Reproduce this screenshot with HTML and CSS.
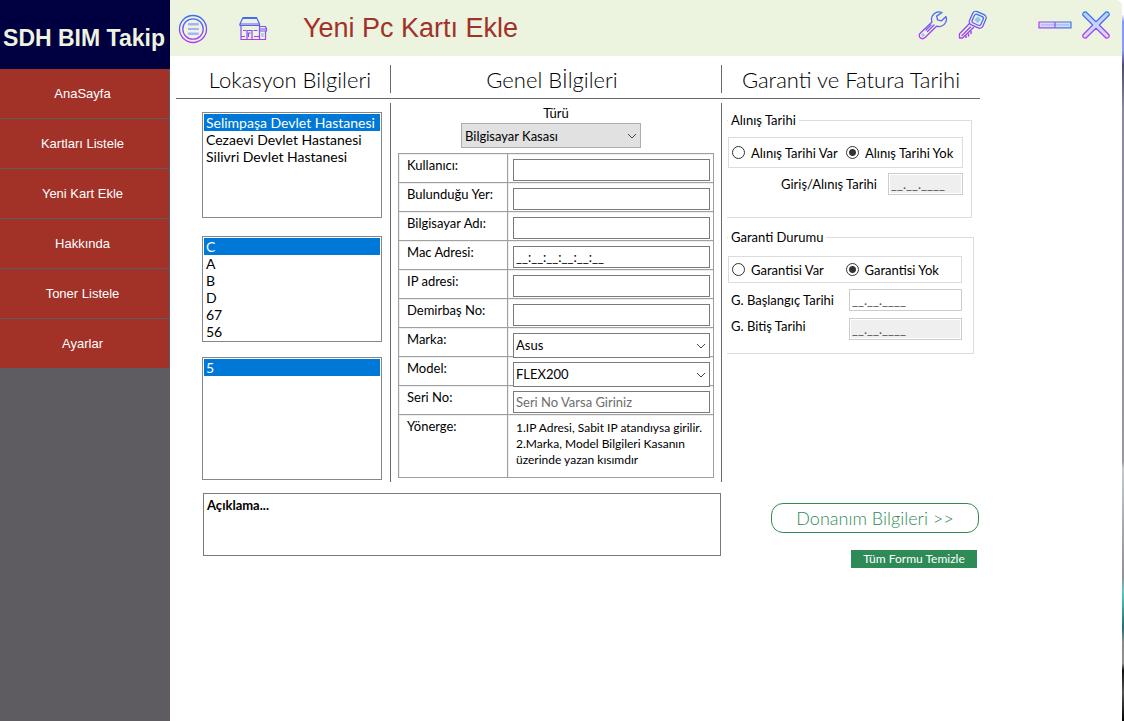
FILE: index.html
```html
<!DOCTYPE html>
<html lang="tr">
<head>
<meta charset="utf-8">
<title>SDH BIM Takip</title>
<link rel="stylesheet" href="styles.css">
</head>
<body>
<div class="app">
  <aside class="sidebar">
    <div class="brand">SDH BIM Takip</div>
    <nav class="menu">
      <button type="button">AnaSayfa</button>
      <button type="button">Kartları Listele</button>
      <button type="button">Yeni Kart Ekle</button>
      <button type="button">Hakkında</button>
      <button type="button">Toner Listele</button>
      <button type="button">Ayarlar</button>
    </nav>
  </aside>

  <div class="window">
    <header class="topbar">
      <svg width="0" height="0" class="defs" aria-hidden="true">
        <defs>
          <linearGradient id="g" gradientUnits="userSpaceOnUse" x1="0" y1="0" x2="0" y2="30">
            <stop offset="0" stop-color="#2f74f5"/><stop offset="1" stop-color="#bf35f5"/>
          </linearGradient>
          <linearGradient id="gh" gradientUnits="userSpaceOnUse" x1="0" y1="0" x2="34" y2="0">
            <stop offset="0" stop-color="#b43cf0"/><stop offset="1" stop-color="#3c7cf0"/>
          </linearGradient>
          <linearGradient id="f" gradientUnits="userSpaceOnUse" x1="0" y1="0" x2="0" y2="30">
            <stop offset="0" stop-color="#a4dcfb"/><stop offset="1" stop-color="#e6d4f8"/>
          </linearGradient>
        </defs>
      </svg>
      <button type="button" class="icon" aria-label="Menü">
        <svg width="30" height="30" viewBox="0 0 30 30" fill="none" stroke="url(#g)">
          <circle cx="15" cy="15" r="13.5" stroke-width="1.3"/>
          <circle cx="15" cy="15" r="10.2" stroke-width="1.3"/>
          <path d="M10 10.2h10.500M10 15h10.500M10 19.800h10.500" stroke="#a4b0fc" stroke-width="2"/>
          <path d="M10 10.200h10.500M10 15h10.500M10 19.800h10.500" stroke="#a4b0fc" stroke-width="2"/>
        </svg>
      </button>
      <button type="button" class="icon icon-store" aria-label="Kurum">
        <svg width="30" height="30" viewBox="0 0 30 30" fill="none" stroke="url(#g)" stroke-width="1.2">
          <path d="M4.500 4.500h14.500l2.500 5.500h-19.500zM5 4.500v-1h13.500v1M2 10v1.500h19.500v-1.500M3 11.500v14h18.500v-14"/>
          <path d="M21.500 12.500h6l1 2.500h-7M21.500 17h7v-2M27.500 17v8.500h-6M9 25.500v-9h5v9M10.500 23v-4h2.200M5 16.500h3M15.500 16.500h4M3 22.500h4M16 22.500h5"/>
          <path d="M24.500 19v4" stroke="#9fd0fb" stroke-width="2.500"/>
        </svg>
      </button>
      <h1>Yeni Pc Kartı Ekle</h1>
      <div class="tools">
        <button type="button" class="icon" aria-label="Araçlar">
          <svg width="30" height="30" viewBox="0 0 30 30" fill="none" stroke="url(#g)" stroke-width="1.300" stroke-linejoin="round" stroke-linecap="round">
            <path d="M24 2.500a7.500 7.500 0 0 0-10 9.500L2.200 23.200a3.200 3.200 0 0 0 4.600 4.600L18.500 16.200a7.500 7.500 0 0 0 9.500-9.600l-4.500 4.200-4-1-.8-3.700z"/>
            <path d="M9.500 21.500l6.500-6.500M8 20l5-5"/>
            <circle cx="5" cy="25" r="1" stroke="#8dc8fa"/>
          </svg>
        </button>
        <button type="button" class="icon" aria-label="Anahtar">
          <svg width="30" height="30" viewBox="0 0 30 30" fill="none" stroke="url(#g)" stroke-width="1.300" stroke-linejoin="round" stroke-linecap="round">
            <rect x="12.500" y="2.500" width="14.500" height="14.500" rx="3.500" transform="rotate(24 19.700 9.700)"/>
            <rect x="15" y="5" width="9.500" height="9.500" rx="2" transform="rotate(24 19.700 9.700)"/>
            <path d="M19.700 7.200l2.500 2.500-2.500 2.500-2.500-2.500z" fill="#8cc6fa" stroke="#8cc6fa"/>
            <path d="M11.500 13.500L1.800 23.500q-.8 1-.3 2.500v2h3L15.500 17.500M4 25.500l8.500-8.500"/>
            <path d="M8 27.500v-1.500M10.500 26v-2M13 23.500v-2" stroke-width="1.500"/>
          </svg>
        </button>
        <button type="button" class="icon icon-min" aria-label="Küçült">
          <svg width="34" height="8" viewBox="0 0 34 8" fill="#cfe0f5" stroke="url(#gh)" stroke-width="1.200">
            <path d="M1 1h32v5.800h-32zM17 1v5.800"/>
            <path d="M3 3.900h28" opacity=".35"/>
          </svg>
        </button>
        <button type="button" class="icon icon-close" aria-label="Kapat">
          <svg width="30" height="30" viewBox="0 0 30 30" fill="url(#f)" stroke="url(#g)" stroke-width="1.200" stroke-linejoin="round">
            <path d="M1.800 5q-.3-3.300 3-3.200L15 11.700 25.200 1.800q3.300-.1 3 3.200L18.300 15l9.900 10q.3 3.300-3 3.200L15 18.300 4.800 28.200q-3.300.1-3-3.200L11.700 15z"/>
          </svg>
        </button>
      </div>
    </header>

    <main class="content">
      <div class="cols heads">
        <h2>Lokasyon Bilgileri</h2>
        <h2>Genel Bİlgileri</h2>
        <h2>Garanti ve Fatura Tarihi</h2>
      </div>

      <div class="cols body">
        <section class="location">
          <select size="6" class="list" aria-label="Hastane">
            <option selected>Selimpaşa Devlet Hastanesi</option>
            <option>Cezaevi Devlet Hastanesi</option>
            <option>Silivri Devlet Hastanesi</option>
          </select>
          <select size="6" class="list" aria-label="Blok">
            <option selected>C</option>
            <option>A</option>
            <option>B</option>
            <option>D</option>
            <option>67</option>
            <option>56</option>
          </select>
          <select size="7" class="list list-tall" aria-label="Kat">
            <option selected>5</option>
          </select>
        </section>

        <section class="general">
          <label for="type">Türü</label>
          <div class="combo combo-type"><select id="type"><option>Bilgisayar Kasası</option></select><svg width="10" height="6" viewBox="0 0 10 6"><path d="M1 1l4 4 4-4"/></svg></div>
          <table class="form">
            <tr><th><label for="user">Kullanıcı:</label></th><td><input id="user" type="text"></td></tr>
            <tr><th><label for="place">Bulunduğu Yer:</label></th><td><input id="place" type="text"></td></tr>
            <tr><th><label for="pc">Bilgisayar Adı:</label></th><td><input id="pc" type="text"></td></tr>
            <tr><th><label for="mac">Mac Adresi:</label></th><td><input id="mac" class="mask" type="text" value="__:__:__:__:__:__"></td></tr>
            <tr><th><label for="ip">IP adresi:</label></th><td><input id="ip" type="text"></td></tr>
            <tr><th><label for="asset">Demirbaş No:</label></th><td><input id="asset" type="text"></td></tr>
            <tr><th><label for="brand">Marka:</label></th><td><div class="combo"><select id="brand"><option>Asus</option></select><svg width="10" height="6" viewBox="0 0 10 6"><path d="M1 1l4 4 4-4"/></svg></div></td></tr>
            <tr><th><label for="model">Model:</label></th><td><div class="combo"><select id="model"><option>FLEX200</option></select><svg width="10" height="6" viewBox="0 0 10 6"><path d="M1 1l4 4 4-4"/></svg></div></td></tr>
            <tr><th><label for="serial">Seri No:</label></th><td><input id="serial" type="text" placeholder="Seri No Varsa Giriniz"></td></tr>
            <tr class="help"><th>Yönerge:</th><td>1.IP Adresi, Sabit IP atandıysa girilir.<br>2.Marka, Model Bilgileri Kasanın<br>üzerinde yazan kısımdır</td></tr>
          </table>
        </section>

        <section class="warranty">
          <fieldset class="purchase">
            <legend>Alınış Tarihi</legend>
            <div class="choices">
              <label><input type="radio" name="purchase">Alınış Tarihi Var</label>
              <label><input type="radio" name="purchase" checked>Alınış Tarihi Yok</label>
            </div>
            <div class="date date-short">
              <label for="bought">Giriş/Alınış Tarihi</label>
              <input id="bought" class="mask" type="text" value="__.__.____" disabled>
            </div>
          </fieldset>
          <fieldset class="guarantee">
            <legend>Garanti Durumu</legend>
            <div class="choices">
              <label><input type="radio" name="guarantee">Garantisi Var</label>
              <label><input type="radio" name="guarantee" checked>Garantisi Yok</label>
            </div>
            <div class="date">
              <label for="start">G. Başlangıç Tarihi</label>
              <input id="start" class="mask" type="text" value="__.__.____">
            </div>
            <div class="date date-end">
              <label for="end">G. Bitiş Tarihi</label>
              <input id="end" class="mask" type="text" value="__.__.____" disabled>
            </div>
          </fieldset>
        </section>
      </div>

      <div class="cols foot">
        <textarea aria-label="Açıklama">Açıklama...</textarea>
        <div class="actions">
          <button type="button" class="next">Donanım Bilgileri &gt;&gt;</button>
          <button type="button" class="clear">Tüm Formu Temizle</button>
        </div>
      </div>
    </main>
  </div>
  <div class="backdrop"></div>
</div>
</body>
</html>
```

FILE: styles.css
```css
* { box-sizing: border-box; }

body {
  margin: 0;
  font: 13px/16px Lato, "Open Sans", sans-serif;
  color: #000;
  background: #fff;
}

button, input, select, textarea { font: inherit; color: inherit; }
button { cursor: pointer; }

.app {
  display: grid;
  grid-template-columns: 170px 1fr 2px;
  min-height: 100vh;
}

.sidebar { background: #5e5c61; }

.brand {
  display: flex;
  align-items: center;
  justify-content: center;
  height: 69px;
  padding: 6px 2px 0 0;
  background: #000040;
  color: #edf3df;
  font: bold 23px/26px "Liberation Sans", sans-serif;
  white-space: nowrap;
}

.menu {
  display: flex;
  flex-direction: column;
  gap: 1px;
  padding-right: 1px;
}

.menu button {
  height: 49px;
  padding: 0 4px 0 0;
  border: 0;
  background: #a23128;
  color: #fff;
  font: 13px/16px "Liberation Sans", sans-serif;
}

.topbar {
  display: flex;
  align-items: center;
  height: 56px;
  padding: 0 11px 0 8px;
  background: #ecf3df;
  border-top-right-radius: 6px;
}

.defs { position: absolute; }

.icon {
  display: flex;
  padding: 1px 0 0;
  border: 0;
  background: none;
}

.icon-store { margin-left: 30px; }

.topbar h1 {
  margin: 0 0 0 35px;
  color: #a23128;
  font: 27px/32px "Liberation Sans", sans-serif;
}

.tools {
  display: flex;
  align-items: center;
  gap: 10px;
  margin-left: auto;
  padding-bottom: 7px;
}

.icon-min { margin-left: 40px; }
.icon-close { margin-left: -1px; }

.content {
  max-width: 810px;
  padding-left: 6px;
}

.cols {
  display: grid;
  grid-template-columns: 214fr 331fr 259fr;
}

.heads {
  padding: 9px 0 5px;
  border-bottom: 1px solid #69696b;
}

.heads h2 {
  margin: 0;
  padding-top: 1px;
  font-size: 22px;
  line-height: 27px;
  font-weight: 300;
  text-align: center;
}

.heads h2:first-child { padding-left: 14px; }
.heads h2:nth-child(2) { padding-right: 8px; }
.heads h2 + h2, .body section + section { border-left: 1px solid #69696b; }

.body { padding-top: 4px; }

.location {
  display: flex;
  flex-direction: column;
  gap: 18px;
  padding: 9px 8px 2px 26px;
}

.list {
  width: 100%;
  height: 106px;
  padding: 1px;
  border: 1px solid #828790;
  border-radius: 0;
  background: #fff;
  font-size: 14px;
  overflow: hidden;
  outline: 0;
}

.list-tall { height: 123px; margin-top: -3px; }

.list option {
  height: 17px;
  min-height: 17px;
  padding: 0 2px;
  font-size: 14px;
  line-height: 17px;
  color: #000;
}

.list option:checked {
  background: #0078d7 linear-gradient(#0078d7, #0078d7);
  color: #fff;
  -webkit-text-fill-color: #fff;
}

.general {
  display: flex;
  flex-direction: column;
  align-items: center;
  padding: 2px 7px 4px;
}

.combo {
  display: grid;
  align-items: center;
}

.combo select, .combo svg { grid-area: 1 / 1; }

.combo select {
  appearance: none;
  width: 100%;
  height: 25px;
  padding: 0 2px 1px;
  border: 1px solid #7a7a7a;
  border-radius: 0;
  background: #fff;
}

.combo svg {
  justify-self: end;
  margin-right: 4px;
  fill: none;
  stroke: #444;
  pointer-events: none;
}

.combo-type { width: 180px; margin: 2px 10px 5px 0; }
.combo-type select { background: #e1e1e1; border-color: #adadad; padding: 0 3px; }

.form {
  width: 100%;
  border-collapse: collapse;
  border: 1px solid #a0a0a0;
}

.form th, .form td {
  height: 29px;
  border: 1px solid #a0a0a0;
  vertical-align: top;
  text-align: left;
  font-weight: 400;
  box-shadow: inset 1px 1px #eee;
}

.form th { width: 109px; padding: 3px 8px; }
.form td { padding: 5px 3px 1px 5px; }
.form .combo { margin-bottom: -3px; }

.form input {
  display: block;
  width: 100%;
  height: 22px;
  padding: 0 2px;
  border: 1px solid #7a7a7a;
}

.form input::placeholder { color: #6d6d6d; }

.form .help th, .form .help td { height: 63px; }
.form .help td { padding: 5px 0 0 8px; font-size: 12px; white-space: nowrap; }

.warranty {
  display: flex;
  flex-direction: column;
  gap: 11px;
  padding: 9px 6px 0 5px;
}

fieldset {
  min-width: 0;
  margin: 0;
  padding: 0 11px 0 1px;
  border: 1px solid #dcdcdc;
  border-left: 0;
}

legend { padding: 0 3px; }
.purchase { padding-bottom: 22px; margin-right: 2px; }
.guarantee { padding-bottom: 13px; }

.choices {
  display: grid;
  grid-template-columns: 115fr 116fr;
  align-items: center;
  height: 31px;
  margin-top: 9px;
  padding: 0 1px 0 3px;
  border: 1px solid #dcdcdc;
}

.purchase .choices { margin-right: -3px; }
.guarantee .choices { height: 27px; margin-top: 11px; }

.choices label {
  display: flex;
  align-items: center;
  gap: 6px;
  white-space: nowrap;
}

.choices input {
  appearance: none;
  flex: none;
  width: 13px;
  height: 13px;
  margin: 0;
  border: 1px solid #333;
  border-radius: 50%;
}

.choices input:checked { background: radial-gradient(#333 0 3px, #fff 4px); }

.date {
  display: grid;
  grid-template-columns: 118fr 113fr;
  align-items: center;
  margin-top: 6px;
  padding-left: 3px;
}

.date-short {
  grid-template-columns: 1fr 75px;
  gap: 11px;
  margin: 5px -3px 0 0;
  text-align: right;
}

.date-end { align-items: start; margin-top: 7px; }

.date input {
  width: 100%;
  height: 22px;
  padding: 0 2px;
  border: 1px solid #ccc;
  background: #fff;
  color: #555;
}

.date input:disabled { background: #efefef; box-shadow: inset 0 0 0 1px #fff; }

.foot { padding-top: 11px; }

.foot textarea {
  display: block;
  grid-column: span 2;
  height: 63px;
  margin-left: 27px;
  padding: 3px;
  border: 1px solid #7a7a7a;
  font-weight: 700;
  resize: none;
}

.actions {
  display: flex;
  flex-direction: column;
  align-items: flex-end;
  gap: 17px;
  padding: 10px 1px 0 0;
}

.actions button { white-space: nowrap; }

.next {
  width: 208px;
  height: 30px;
  padding: 0;
  border: 1px solid #2e8b57;
  border-radius: 12px;
  background: #fff;
  color: #2e8b57;
  font-size: 18px;
  font-weight: 300;
}

.clear {
  width: 126px;
  height: 18px;
  margin-right: 2px;
  padding: 0;
  border: 0;
  background: #2e8b57;
  color: #fff;
  font-size: 12px;
}

.backdrop {
  background: linear-gradient(#fff 0 2%, #7d9bf8 3%, #8a9cf5 7%, #4a4a72 9%, #8a87a0 15%, #98989c 64%, #c4c8cc 65%, #8f8f94 80%, #60c8c8 82%, #1c7076 87%, #8a8a8a 89%, #909090 92%, #101010 93%, #555 96%, #000);
}
```
